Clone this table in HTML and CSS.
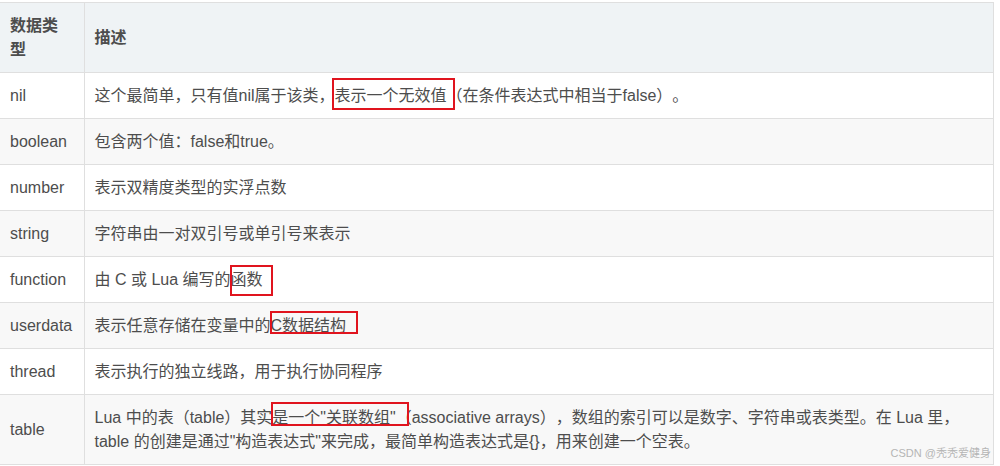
FILE: index.html
```html
<!DOCTYPE html>
<html lang="zh-CN">
<head>
<meta charset="utf-8">
<title>Lua 数据类型</title>
<link rel="stylesheet" href="styles.css">
</head>
<body>
<div class="wrap">
  <table class="types">
    <colgroup>
      <col class="c-type">
      <col class="c-desc">
    </colgroup>
    <thead>
      <tr><th>数据类型</th><th>描述</th></tr>
    </thead>
    <tbody>
      <tr><td>nil</td><td>这个最简单，只有值nil属于该类，<span class="mark m-nil">表示一个无效值</span>（在条件表达式中相当于false）。</td></tr>
      <tr><td>boolean</td><td>包含两个值：false和true。</td></tr>
      <tr><td>number</td><td>表示双精度类型的实浮点数</td></tr>
      <tr><td>string</td><td>字符串由一对双引号或单引号来表示</td></tr>
      <tr><td>function</td><td>由 C 或 Lua 编写的<span class="mark m-func">函数</span></td></tr>
      <tr><td>userdata</td><td>表示任意存储在变量中的<span class="mark m-user">C数据结构</span></td></tr>
      <tr><td>thread</td><td>表示执行的独立线路，用于执行协同程序</td></tr>
      <tr><td>table</td><td>Lua 中的表（table）其实<span class="mark m-table">是一个"关联数组"</span>（associative arrays），数组的索引可以是数字、字符串或表类型。在 Lua 里，<br>table 的创建是通过"构造表达式"来完成，最简单构造表达式是{}，用来创建一个空表。</td></tr>
    </tbody>
  </table>
  <div class="watermark">CSDN @秃秃爱健身</div>
</div>
</body>
</html>
```

FILE: styles.css
```css
html, body {
  margin: 0;
  padding: 0;
  background: #ffffff;
}

.wrap {
  position: relative;
  width: 1000px;
  height: 466px;
  padding-top: 2px;
  box-sizing: border-box;
  overflow: hidden;
}

.types {
  border-collapse: collapse;
  table-layout: fixed;
  width: 994px;
  font-family: "Liberation Sans", "Noto Sans CJK SC", sans-serif;
  font-size: 16px;
  line-height: 24px;
  color: #4d4d4d;
  text-spacing-trim: space-all;
}

.c-type { width: 84px; }

.types th,
.types td {
  border: 1px solid #dfdfdf;
  padding: 11px 10px 10px 10px;
  text-align: left;
  vertical-align: middle;
}

.types th:first-child,
.types td:first-child {
  border-left: none;
}

.types th {
  background: #eff3f5;
  font-weight: bold;
  color: #4d4d4d;
}

.types tbody tr:nth-child(odd) { background: #ffffff; }
.types tbody tr:nth-child(even) { background: #f8f8f8; }

.mark {
  position: relative;
}

.mark::after {
  content: "";
  position: absolute;
  border: 2px solid #e0141e;
  pointer-events: none;
}

.m-nil::after { left: -3px; right: -8px; top: -9px; bottom: -6px; }
.m-func::after { left: -1px; right: -10px; top: -6px; bottom: -8px; }
.m-user::after { left: -1px; right: -12px; top: -6px; bottom: 0; }
.m-table::after { left: -1px; right: -13px; top: -7px; bottom: 0; }

.watermark {
  position: absolute;
  right: 9px;
  bottom: 6px;
  font-family: "Liberation Sans", "Noto Sans CJK SC", sans-serif;
  font-size: 11px;
  color: #b5b5b5;
}
```
